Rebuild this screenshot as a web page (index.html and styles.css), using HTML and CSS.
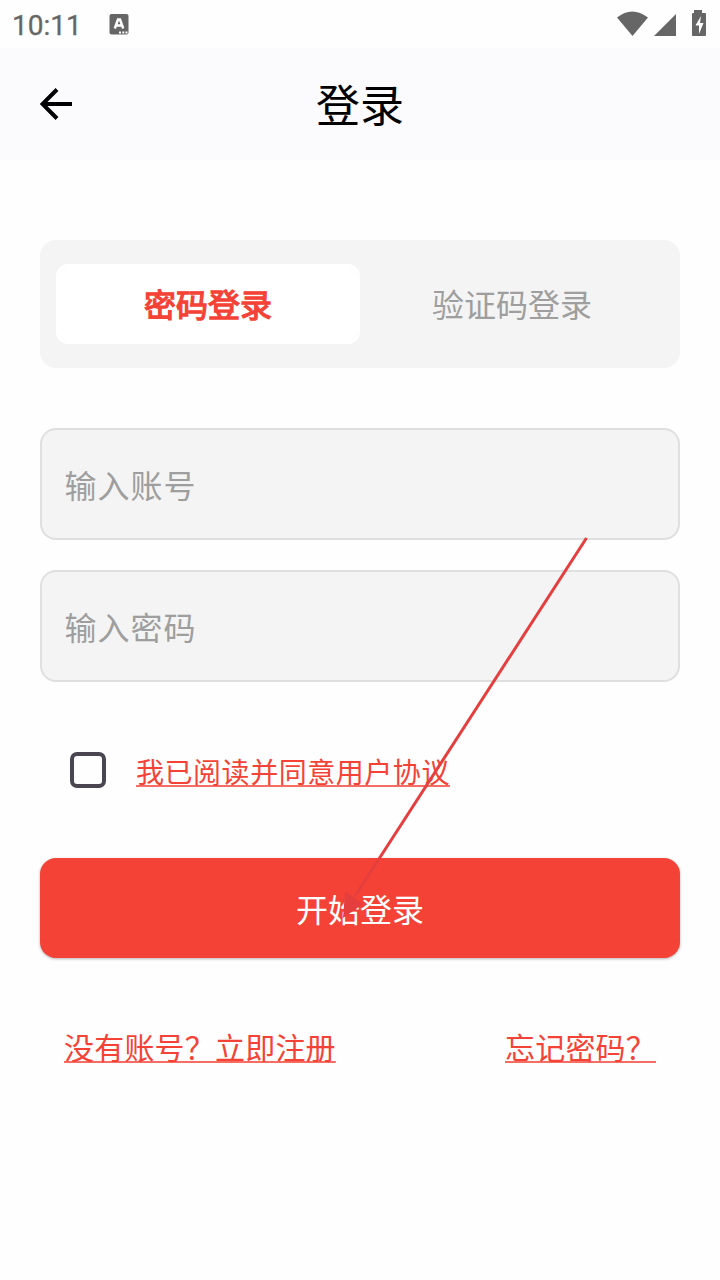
FILE: index.html
```html
<!DOCTYPE html>
<html lang="zh-CN">
<head>
<meta charset="utf-8">
<title>登录</title>
<link rel="stylesheet" href="styles.css">
</head>
<body>
<div class="screen">
  <div class="status">
    <span class="clock">10:11</span>
    <svg class="keyboard" width="20" height="22" viewBox="0 0 20 22"><rect x=".5" y="0" width="19" height="20.500" rx="2" fill="#666"/><path d="M5.800 14.500 9 5.500h2l3.200 9M7.500 11.500h5" fill="none" stroke="#fff" stroke-width="2.500"/><path d="M10 17.500h2v2h-2zM13.300 17.500h2v2h-2zM16.500 17.500h2v2h-2z" fill="#fff"/></svg>
    <svg class="signals" width="92" height="28" viewBox="0 0 92 28"><g fill="#666"><path d="M1 7.500Q16-4.500 32 7.500L16.500 26z"/><path d="M38 26 60 4v22z"/><path d="M78 0h8v3h3q1 0 1 1v21q0 1-1 1H77q-1 0-1-1V4q0-1 1-1h1z"/></g><path d="M85 6 79.500 15.500H83V24L87.500 13H84z" fill="#fff"/></svg>
  </div>
  <header class="appbar">
    <svg class="back" width="32" height="32" viewBox="0 0 32 32"><path d="M32 16H3M17 1.500 2.500 16 17 30.500" fill="none" stroke="#000" stroke-width="4"/></svg>
    <h1 class="title">登录</h1>
  </header>
  <main class="content">
    <div class="tabs">
      <div class="tab tab-active">密码登录</div>
      <div class="tab">验证码登录</div>
    </div>
    <div class="fields">
      <div class="field">输入账号</div>
      <div class="field">输入密码</div>
    </div>
    <div class="agreement">
      <span class="checkbox"></span>
      <a class="link agreement-link">我已阅读并同意用户协议</a>
    </div>
    <div class="submit">开始登录</div>
    <div class="links">
      <a class="link">没有账号？立即注册</a>
      <a class="link">忘记密码？</a>
    </div>
  </main>
  <svg class="pointer" width="720" height="1280" viewBox="0 0 720 1280"><path d="M586.500 538 355 896" stroke="#e53e3f" stroke-width="3"/><path d="M343 918 345 891 363 904z" fill="#e53e3f"/></svg>
</div>
</body>
</html>
```
FILE: styles.css
```css
* { box-sizing: border-box; }
body {
  margin: 0;
  background: #fefefe;
  font-family: "Noto Sans CJK SC", sans-serif;
}
.screen {
  position: relative;
  width: 720px;
  height: 1280px;
  overflow: hidden;
}
.status {
  display: flex;
  align-items: flex-start;
  height: 48px;
  padding: 0 13px 0 12px;
}
.clock {
  width: 97px;
  padding-top: 9px;
  font: 28px/33px Roboto, sans-serif;
  -webkit-text-stroke: .3px #666;
  color: #666;
}
.keyboard { margin-top: 14px; }
.signals { margin: 10px -1px 0 auto; }
.appbar {
  display: grid;
  grid-template-columns: 32px 1fr 32px;
  align-items: center;
  height: 112px;
  padding: 0 40px;
  background: #fbfbfe;
}
.title {
  margin: 0;
  padding-bottom: 2px;
  font-size: 44px;
  font-weight: 400;
  line-height: 64px;
  text-align: center;
}
.content { padding: 80px 40px 0; }
.tabs {
  display: flex;
  height: 128px;
  padding: 24px 16px;
  border-radius: 16px;
  background: #f4f4f4;
}
.tab {
  flex: 1;
  border-radius: 12px;
  font-size: 32px;
  line-height: 78px;
  text-align: center;
  color: #9e9e9e;
}
.tab-active {
  background: #fff;
  color: #f44336;
  -webkit-text-stroke: 1.3px #f44336;
}
.fields {
  display: grid;
  gap: 30px;
  margin-top: 60px;
}
.field {
  height: 112px;
  padding: 0 22.5px;
  border: 2px solid #dfdfdf;
  border-radius: 16px;
  background: #f4f4f4;
  font-size: 32px;
  line-height: 108px;
  letter-spacing: 1px;
  color: #9e9e9e;
}
.agreement {
  display: flex;
  align-items: center;
  gap: 30px;
  height: 60px;
  margin-top: 58px;
  padding-left: 30px;
}
.checkbox {
  width: 36px;
  height: 36px;
  border: 4px solid #494651;
  border-radius: 7px;
}
.link {
  font-size: 30px;
  line-height: 44px;
  letter-spacing: .2px;
  color: #f44336;
  text-decoration: underline;
  text-decoration-color: #f66d63;
  text-decoration-thickness: 2px;
  text-decoration-skip-ink: none;
  text-underline-offset: 2px;
}
.agreement-link {
  padding-top: 1px;
  font-size: 28px;
  letter-spacing: .54px;
}
.submit {
  height: 100px;
  margin-top: 58px;
  border-radius: 16px;
  background: #f44336;
  box-shadow: 0 1px 3px rgba(0, 0, 0, .3);
  font-size: 32px;
  line-height: 101px;
  text-align: center;
  color: #fff;
}
.links {
  display: flex;
  justify-content: space-between;
  margin-top: 66px;
  padding: 0 24px;
}
.pointer {
  position: absolute;
  top: 0;
  left: 0;
}
```
